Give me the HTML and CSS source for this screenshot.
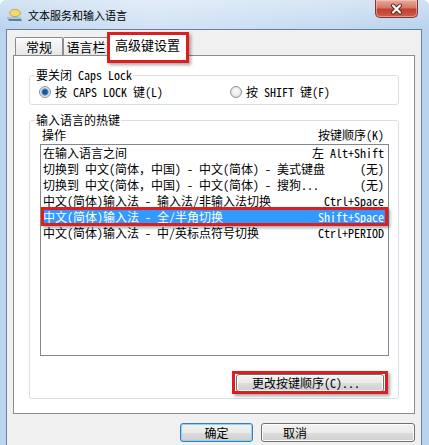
FILE: index.html
```html
<!DOCTYPE html>
<html lang="zh-CN">
  <head>
    <meta charset="UTF-8" />
    <meta name="viewport" content="width=device-width, initial-scale=1.0" />
    <title>文本服务和输入语言</title>
    <link rel="stylesheet" href="styles.css">
  </head>
  <body>
    <div class="window">
      <div class="titlebar">
        <svg class="app-icon" width="17" height="15" viewBox="0 0 17 15">
          <path d="M1 9 h13 l2 4 h-13z" fill="#5b7fae" />
          <path d="M1 9 h13 l1 2 h-13z" fill="#a9c2de" />
          <ellipse cx="9" cy="5" rx="5.5" ry="3.6" fill="#f3d66e" stroke="#c49a2f" stroke-width="0.8" />
        </svg>
        <span class="title">文本服务和输入语言</span>
        <button class="close-button" title="关闭">
          <svg width="15" height="12" viewBox="0 0 15 12">
            <path d="M4 2.5 L11 9.5 M11 2.5 L4 9.5" stroke="#5a2620" stroke-width="4" stroke-linecap="round" />
            <path d="M4 2.5 L11 9.5 M11 2.5 L4 9.5" stroke="#fff" stroke-width="2.2" stroke-linecap="round" />
          </svg>
        </button>
      </div>

      <div class="client">
        <div class="tabs">
          <div class="tab tab-general">常规</div>
          <div class="tab tab-langbar">语言栏</div>
          <div class="tab tab-advanced selected marked">高级键设置</div>
        </div>

        <div class="tab-page">
          <fieldset class="group caps-group">
            <legend>要关闭 Caps Lock</legend>
            <div class="radio-row">
              <label class="radio checked"><span class="dot"></span>按 CAPS LOCK 键(L)</label>
              <label class="radio"><span class="dot"></span>按 SHIFT 键(F)</label>
            </div>
          </fieldset>

          <fieldset class="group hotkey-group">
            <legend>输入语言的热键</legend>
            <div class="list-header">
              <span>操作</span>
              <span>按键顺序(K)</span>
            </div>
            <ul class="hotkey-list">
              <li><span>在输入语言之间</span><span>左 Alt+Shift</span></li>
              <li><span>切换到 中文(简体，中国) - 中文(简体) - 美式键盘</span><span>(无)</span></li>
              <li><span>切换到 中文(简体，中国) - 中文(简体) - 搜狗...</span><span>(无)</span></li>
              <li><span>中文(简体)输入法 - 输入法/非输入法切换</span><span>Ctrl+Space</span></li>
              <li class="selected marked"><span>中文(简体)输入法 - 全/半角切换</span><span>Shift+Space</span></li>
              <li><span>中文(简体)输入法 - 中/英标点符号切换</span><span>Ctrl+PERIOD</span></li>
            </ul>
            <button class="btn change-button marked">更改按键顺序(C)...</button>
          </fieldset>
        </div>

        <div class="actions">
          <button class="btn ok-button">确定</button>
          <button class="btn cancel-button">取消</button>
        </div>
      </div>
    </div>
  </body>
</html>
```

FILE: styles.css
```css
* {
  box-sizing: border-box;
}
html,
body {
  margin: 0;
  background: #fff;
}
body {
  font: 12px/14px "Noto Sans Mono CJK SC", "Noto Sans CJK SC", sans-serif;
  color: #000;
}
.window {
  width: 429px;
  height: 445px;
  overflow: hidden;
  display: flex;
  flex-direction: column;
  border-radius: 6px 6px 0 0;
  background: linear-gradient(to right, #bcd4ee, #d3e3f4 35%, #c6dbf1 75%, #b9d2ed);
}
.titlebar {
  height: 29px;
  flex: none;
  display: flex;
  align-items: center;
  padding: 0 11px 0 6px;
  background: linear-gradient(rgba(255, 255, 255, 0.35), rgba(255, 255, 255, 0));
}
.app-icon {
  flex: none;
  margin-top: 1px;
}
.title {
  margin-left: 5px;
  font: 11px/14px "Noto Sans CJK SC", sans-serif;
}
.close-button {
  align-self: flex-start;
  margin-left: auto;
  width: 43px;
  height: 18px;
  padding: 0;
  display: flex;
  align-items: center;
  justify-content: center;
  border: 1px solid #7a3a33;
  border-top: none;
  border-radius: 0 0 5px 5px;
  background: linear-gradient(#e9ab9c, #d47866 45%, #c0402d 55%, #cf5f4c);
  box-shadow: inset 0 0 0 1px rgba(255, 210, 200, 0.5);
}
.client {
  flex: 1;
  margin: 0 7px 0 6px;
  border: 1px solid #68819d;
  border-bottom: none;
  background: #f0f0f0;
}
.tabs {
  display: flex;
  align-items: flex-end;
  height: 22px;
  margin: 3px 6px 0;
  padding-left: 2px;
}
.tab {
  height: 18px;
  padding-top: 1px;
  border: 1px solid #898c95;
  border-bottom: none;
  border-radius: 2px 2px 0 0;
  background: linear-gradient(#fbfbfb, #e6e6e6);
  font: 13px/16px "Noto Sans CJK SC", sans-serif;
  text-align: center;
  white-space: nowrap;
}
.tab-general {
  width: 48px;
}
.tab-langbar {
  width: 46px;
}
.tab-advanced {
  width: 79px;
  margin-left: -1px;
}
.tab.selected {
  position: relative;
  z-index: 1;
  height: 23px;
  margin-bottom: -1px;
  padding-top: 3px;
  background: #fff;
}
.marked {
  position: relative;
}
.marked::after {
  content: "";
  position: absolute;
  border: 3px solid #dc1e1e;
  box-shadow: 2px 2px 3px rgba(0, 0, 0, 0.35);
  pointer-events: none;
}
.tab.marked::after {
  inset: -2px -3px -7px -2px;
}
.tab-page {
  height: 359px;
  margin: 0 6px;
  padding: 12px 15px 0;
  border: 1px solid #898c95;
  background: #fff;
}
.group {
  margin: 0;
  padding: 0;
  min-width: 0;
  border: 1px solid #d5dfe5;
  border-radius: 3px;
}
.group legend {
  margin-left: 5px;
  padding: 0 1px;
  line-height: 14px;
}
.radio-row {
  display: grid;
  grid-template-columns: 191px auto;
  padding: 3px 0 5px 9px;
}
.radio {
  display: flex;
  align-items: center;
  gap: 4px;
  height: 14px;
  white-space: nowrap;
}
.dot {
  flex: none;
  width: 12px;
  height: 12px;
  border: 1px solid #8f9192;
  border-radius: 50%;
  background: radial-gradient(circle at 50% 40%, #fdfdfd, #d9d9d9);
}
.radio.checked .dot {
  background: radial-gradient(circle, #1c568c 0 2px, #4a8ccb 3px, #c4dbf0 4px, #f2f2f2 5px);
}
.hotkey-group {
  margin-top: 8px;
}
.list-header {
  display: flex;
  justify-content: space-between;
  margin: 1px 14px 0 12px;
}
.hotkey-list {
  list-style: none;
  height: 212px;
  margin: 2px 9px 0 10px;
  padding: 0;
  border: 1px solid #828790;
  background: #fff;
}
.hotkey-list li {
  display: flex;
  justify-content: space-between;
  height: 16px;
  padding: 0 4px 0 2px;
  line-height: 16px;
  white-space: nowrap;
}
.hotkey-list li.selected {
  background: #3399ff;
  color: #fff;
}
.hotkey-list li.marked::after {
  inset: -2px 0 -1px 0;
}
.btn {
  padding: 0;
  border: 1px solid #707070;
  border-radius: 3px;
  background: linear-gradient(#f2f2f2, #ebebeb 50%, #dddddd 50%, #cfcfcf);
  box-shadow: inset 0 0 0 1px #fcfcfc;
  font: 12px/16px "Noto Sans Mono CJK SC", "Noto Sans CJK SC", sans-serif;
  color: #000;
}
.change-button {
  display: block;
  width: 148px;
  height: 18px;
  margin: 18px 14px 6px auto;
  padding-right: 8px;
}
.change-button.marked::after {
  inset: -4px -5px -3px -5px;
}
.actions {
  display: flex;
  justify-content: flex-end;
  gap: 8px;
  margin: 9px 6px 0 0;
}
.actions .btn {
  height: 19px;
}
.ok-button {
  width: 73px;
  border-color: #3c7fb1;
  box-shadow: inset 0 0 0 1px #8fd3f5;
}
.cancel-button {
  width: 154px;
  padding-left: 21px;
  text-align: left;
}
```
